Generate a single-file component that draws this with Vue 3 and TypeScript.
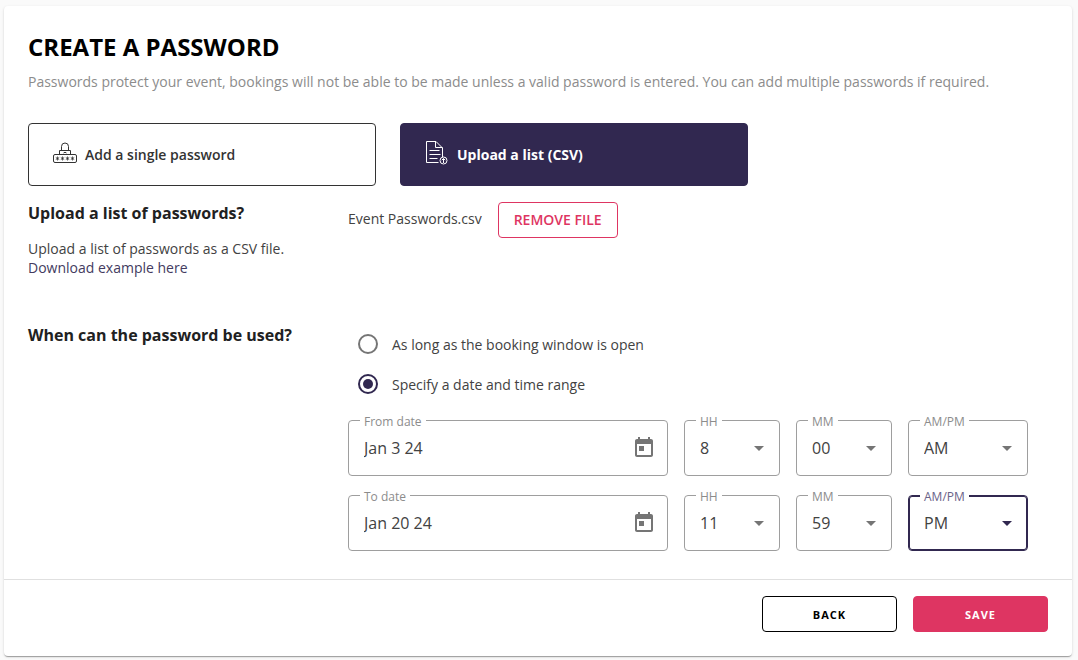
<script setup lang="ts">
import { ref } from 'vue'

interface SelectField {
  id: string
  label: string
  value: string
  options: string[]
}

interface DateRow {
  id: string
  label: string
  value: string
  selects: SelectField[]
}

const hours = Array.from({ length: 12 }, (_, i) => String(i + 1))
const minutes = Array.from({ length: 60 }, (_, i) => String(i).padStart(2, '0'))
const periods = ['AM', 'PM']

function makeRow(id: string, label: string, value: string, hh: string, mm: string, period: string): DateRow {
  return {
    id,
    label,
    value,
    selects: [
      { id: `${id}-hour`, label: 'HH', value: hh, options: hours },
      { id: `${id}-minute`, label: 'MM', value: mm, options: minutes },
      { id: `${id}-period`, label: 'AM/PM', value: period, options: periods },
    ],
  }
}

const rows = ref<DateRow[]>([
  makeRow('from', 'From date', 'Jan 3 24', '8', '00', 'AM'),
  makeRow('to', 'To date', 'Jan 20 24', '11', '59', 'PM'),
])

const mode = ref<'single' | 'csv'>('csv')
const availability = ref<'window' | 'range'>('range')
const fileName = ref('Event Passwords.csv')
const activeField = ref('to-period')
</script>

<template>
  <main class="card">
    <div class="body">
      <h1>CREATE A PASSWORD</h1>
      <p class="intro">
        Passwords protect your event, bookings will not be able to be made unless a valid password is entered. You can
        add multiple passwords if required.
      </p>

      <div class="modes">
        <button type="button" class="mode" :class="{ selected: mode === 'single' }" @click="mode = 'single'">
          <svg class="mode-icon" width="24" height="24" viewBox="0 0 24 24" fill="none" stroke="currentColor" aria-hidden="true">
            <path d="M8.5 9.500V5.500a3.500 3.500 0 0 1 7 0V9.500M6.500 13V9.500h11V13" />
            <rect x="0.500" y="13.500" width="23" height="8" rx="1.500" />
            <path d="M10.500 12q1.500-1.500 3 0" />
            <path
              stroke-width="0.800"
              d="M4.500 15.500v4M2.800 16.500l3.400 2M6.200 16.500l-3.400 2M9.500 15.500v4M7.800 16.500l3.400 2M11.200 16.500l-3.400 2M14.500 15.500v4M12.800 16.500l3.400 2M16.200 16.500l-3.400 2M19.500 15.500v4M17.800 16.500l3.400 2M21.200 16.500l-3.400 2"
            />
          </svg>
          Add a single password
        </button>
        <button type="button" class="mode" :class="{ selected: mode === 'csv' }" @click="mode = 'csv'">
          <svg class="mode-icon" width="24" height="24" viewBox="0 0 24 24" fill="none" stroke="currentColor" aria-hidden="true">
            <path d="M13.500 21.500H1.500V0.500H11L17.500 7V16M10.500 0.500V6.500H17.500" />
            <path d="M4.500 9.500h10M4.500 13.500h11M4.500 17.500h8" />
            <circle cx="18.500" cy="19.500" r="3.500" />
            <path d="M18.500 22v-4.500M16.800 19.200l1.700-1.700l1.700 1.700" />
          </svg>
          Upload a list (CSV)
        </button>
      </div>

      <section class="row upload">
        <div class="info">
          <h2>Upload a list of passwords?</h2>
          <p>Upload a list of passwords as a CSV file.<br /><a href="#example">Download example here</a></p>
        </div>
        <div v-if="fileName" class="file">
          <span>{{ fileName }}</span>
          <button type="button" class="remove" @click="fileName = ''">REMOVE FILE</button>
        </div>
      </section>

      <section class="row">
        <div class="info">
          <h2 id="availability-title">When can the password be used?</h2>
        </div>
        <div class="schedule">
          <div class="radios" role="radiogroup" aria-labelledby="availability-title">
            <label class="radio">
              <input v-model="availability" type="radio" name="availability" value="window" />
              As long as the booking window is open
            </label>
            <label class="radio">
              <input v-model="availability" type="radio" name="availability" value="range" />
              Specify a date and time range
            </label>
          </div>

          <div v-if="availability === 'range'" class="dates">
            <div v-for="row in rows" :key="row.id" class="date-row">
              <div class="field" :class="{ active: activeField === row.id }">
                <label :for="row.id">{{ row.label }}</label>
                <input :id="row.id" v-model="row.value" type="text" @focus="activeField = row.id" />
                <button type="button" class="calendar" :aria-label="`Choose ${row.label}`">
                  <svg width="24" height="24" viewBox="0 0 24 24" fill="currentColor" aria-hidden="true">
                    <path
                      d="M19 3h-1V1h-2v2H8V1H6v2H5c-1.110 0-1.990.9-1.990 2L3 19c0 1.100.890 2 2 2h14c1.100 0 2-.9 2-2V5c0-1.100-.9-2-2-2zm0 16H5V8h14v11zM7 10h5v5H7z"
                    />
                  </svg>
                </button>
              </div>
              <div v-for="field in row.selects" :key="field.id" class="field" :class="{ active: activeField === field.id }">
                <label :for="field.id">{{ field.label }}</label>
                <select :id="field.id" v-model="field.value" @focus="activeField = field.id">
                  <option v-for="option in field.options" :key="option" :value="option">{{ option }}</option>
                </select>
                <svg class="arrow" width="10" height="5" viewBox="0 0 10 5" fill="currentColor" aria-hidden="true">
                  <path d="M0 0h10L5 5z" />
                </svg>
              </div>
            </div>
          </div>
        </div>
      </section>
    </div>

    <footer class="actions">
      <button type="button" class="action">BACK</button>
      <button type="button" class="action save">SAVE</button>
    </footer>
  </main>
</template>

<style>
body {
  background: #fafafa;
}
</style>

<style scoped>
.card,
.card * {
  box-sizing: border-box;
}

.card {
  margin: 6px 6px 4px 4px;
  background: #fff;
  border-radius: 4px;
  box-shadow:
    0 2px 1px -1px rgba(0, 0, 0, 0.2),
    0 1px 1px rgba(0, 0, 0, 0.14),
    0 1px 3px rgba(0, 0, 0, 0.12);
  color: #424242;
  font: 400 14px/19px 'Open Sans', 'Noto Sans', sans-serif;
}

button,
input,
select {
  font: inherit;
  color: inherit;
}

button {
  cursor: pointer;
}

.body {
  padding: 24px 24px 28px;
}

h1 {
  margin: 0;
  color: #000;
  font-size: 24px;
  font-weight: 700;
  line-height: 34px;
}

.intro {
  margin: 8px 0 0;
  color: #8c8c8c;
  line-height: 20px;
}

.modes {
  display: flex;
  gap: 24px;
  margin-top: 31px;
}

.mode {
  display: flex;
  flex: 0 1 348px;
  align-items: center;
  gap: 8px;
  height: 63px;
  padding: 0 24px;
  border: 1px solid #333;
  border-radius: 4px;
  background: #fff;
  color: #333;
  font-weight: 600;
}

.mode.selected {
  border-color: #312850;
  background: #312850;
  color: #fff;
  font-weight: 700;
}

.mode-icon {
  flex: none;
  margin-bottom: 4px;
}

.row {
  display: grid;
  grid-template-columns: 320px minmax(0, 1fr);
}

.upload {
  min-height: 122px;
  margin-top: 16px;
}

h2 {
  margin: 0;
  color: #212121;
  font-size: 16px;
  font-weight: 700;
  line-height: 22px;
}

.info p {
  margin: 15px 0 0;
}

a {
  color: #433b60;
  text-decoration: none;
}

.file {
  display: flex;
  align-items: flex-start;
  gap: 16px;
  line-height: 34px;
}

.remove {
  height: 36px;
  padding: 0 15px;
  border: 1px solid #de3562;
  border-radius: 4px;
  background: #fff;
  color: #de3562;
  font-weight: 600;
  line-height: 34px;
}

.radios {
  display: grid;
}

.radio {
  display: flex;
  align-items: center;
  gap: 14px;
  height: 40px;
  padding-left: 10px;
}

.radio input {
  display: grid;
  place-content: center;
  width: 20px;
  height: 20px;
  margin: 0;
  border: 2px solid #757575;
  border-radius: 50%;
  appearance: none;
}

.radio input:checked {
  border-color: #312850;
}

.radio input:checked::before {
  width: 10px;
  height: 10px;
  border-radius: 50%;
  background: #312850;
  content: '';
}

.dates {
  display: grid;
  gap: 19px;
  margin-top: 16px;
}

.date-row {
  display: grid;
  grid-template-columns: minmax(0, 320px) 96px 96px 120px;
  gap: 16px;
}

.field {
  position: relative;
  display: flex;
  align-items: center;
  height: 56px;
  border: 1px solid #9e9e9e;
  border-radius: 4px;
  font-size: 16px;
}

.field label {
  position: absolute;
  top: -8px;
  left: 11px;
  padding: 0 4px;
  background: #fff;
  color: #8c8c8c;
  font-size: 12px;
  line-height: 18px;
}

.field input,
.field select {
  flex: 1;
  min-width: 0;
  height: 100%;
  padding: 0 15px;
  border: 0;
  outline: 0;
  background: none;
  appearance: none;
}

.field.active {
  border-color: #312850;
  box-shadow: inset 0 0 0 1px #312850;
}

.field.active label {
  color: #6a6288;
}

.calendar {
  display: flex;
  margin-right: 11px;
  padding: 0;
  border: 0;
  background: none;
  color: #757575;
}

.arrow {
  position: absolute;
  right: 15px;
  color: #757575;
  pointer-events: none;
}

.active .arrow {
  color: #312850;
}

.actions {
  display: flex;
  justify-content: flex-end;
  gap: 16px;
  padding: 16px 24px 24px;
  border-top: 1px solid #e0e0e0;
}

.action {
  width: 135px;
  height: 36px;
  border: 1px solid #000;
  border-radius: 4px;
  background: #fff;
  color: #000;
  font-size: 11px;
  font-weight: 700;
  letter-spacing: 1px;
}

.action.save {
  border-color: #de3562;
  background: #de3562;
  color: #fff;
}
</style>
